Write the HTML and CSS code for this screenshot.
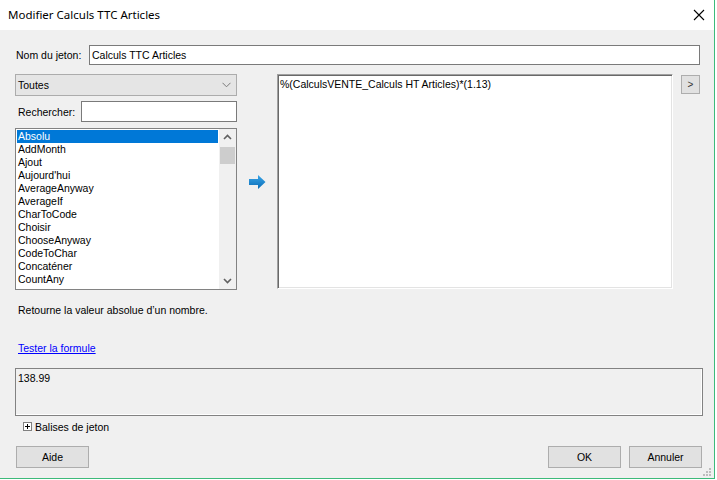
FILE: index.html
```html
<!DOCTYPE html>
<html lang="fr">
<head>
    <meta charset="UTF-8">
    <title>Modifier Calculs TTC Articles</title>
    <link rel="stylesheet" href="styles.css">
</head>
<body>
    <div class="window">
        <div class="titlebar">
            <span class="title">Modifier Calculs TTC Articles</span>
            <svg class="close" width="12" height="12" viewBox="0 0 12 12">
                <path d="M1 1 L11 11 M11 1 L1 11" stroke="#000" stroke-width="1.1" fill="none"/>
            </svg>
        </div>

        <div class="client">
            <div class="name-row">
                <label class="name-label">Nom du jeton:</label>
                <div class="field name-field">Calculs TTC Articles</div>
            </div>

            <div class="main">
                <div class="left">
                    <div class="combo">
                        <span>Toutes</span>
                        <svg width="9" height="6" viewBox="0 0 9 6">
                            <path d="M0.5 0.8 L4.5 4.8 L8.5 0.8" stroke="#7a7a7a" stroke-width="1" fill="none"/>
                        </svg>
                    </div>
                    <div class="search-row">
                        <label>Rechercher:</label>
                        <div class="field search-field"></div>
                    </div>
                    <div class="listbox">
                        <ul class="items">
                            <li class="selected">Absolu</li>
                            <li>AddMonth</li>
                            <li>Ajout</li>
                            <li>Aujourd'hui</li>
                            <li>AverageAnyway</li>
                            <li>AverageIf</li>
                            <li>CharToCode</li>
                            <li>Choisir</li>
                            <li>ChooseAnyway</li>
                            <li>CodeToChar</li>
                            <li>Concaténer</li>
                            <li>CountAny</li>
                        </ul>
                        <div class="scrollbar">
                            <svg class="sb-arrow" width="17" height="17" viewBox="0 0 17 17">
                                <path d="M5 10 L8.5 6.5 L12 10" stroke="#606060" stroke-width="1.6" fill="none"/>
                            </svg>
                            <div class="thumb"></div>
                            <div class="sb-track"></div>
                            <svg class="sb-arrow" width="17" height="17" viewBox="0 0 17 17">
                                <path d="M5 7 L8.5 10.5 L12 7" stroke="#606060" stroke-width="1.6" fill="none"/>
                            </svg>
                        </div>
                    </div>
                </div>

                <div class="insert">
                    <svg width="17" height="14" viewBox="0 0 17 14">
                        <defs>
                            <linearGradient id="blue" x1="0" y1="0" x2="0" y2="1">
                                <stop offset="0" stop-color="#3aa6e8"/>
                                <stop offset="1" stop-color="#0a6cb6"/>
                            </linearGradient>
                        </defs>
                        <path d="M0 4 H9 V0 L16.5 7 L9 14 V10 H0 Z" fill="url(#blue)"/>
                    </svg>
                </div>

                <div class="formula">%(CalculsVENTE_Calculs HT Articles)*(1.13)</div>

                <button type="button" class="small-btn">&gt;</button>
            </div>

            <p class="desc">Retourne la valeur absolue d’un nombre.</p>

            <a class="test-link" href="#">Tester la formule</a>

            <div class="result">138.99</div>

            <div class="tags">
                <span class="plus-box"></span>
                <span>Balises de jeton</span>
            </div>

            <div class="buttons">
                <button type="button" class="btn aide">Aide</button>
                <button type="button" class="btn ok">OK</button>
                <button type="button" class="btn">Annuler</button>
            </div>
        </div>

        <div class="grip">
            <svg width="9" height="9" viewBox="0 0 9 9" fill="#bdbdbd">
                <rect x="6" y="0" width="2" height="2"/>
                <rect x="3" y="3" width="2" height="2"/>
                <rect x="6" y="3" width="2" height="2"/>
                <rect x="0" y="6" width="2" height="2"/>
                <rect x="3" y="6" width="2" height="2"/>
                <rect x="6" y="6" width="2" height="2"/>
            </svg>
        </div>
    </div>
</body>
</html>
```

FILE: styles.css
```css
body {
    margin: 0;
    width: 717px;
    height: 480px;
    background-color: #fff;
    font-family: 'Liberation Sans', Arial, sans-serif;
    font-size: 10.5px;
    color: #000;
    overflow: hidden;
}

.window {
    position: relative;
    width: 714px;
    height: 478px;
    border-right: 1px solid #3dba7a;
    border-bottom: 1px solid #3dba7a;
    display: flex;
    flex-direction: column;
}

.titlebar {
    height: 30px;
    background-color: #fff;
    display: flex;
    align-items: center;
    justify-content: space-between;
    padding: 0 9px 0 8px;
}

.title {
    font-family: 'Noto Sans', 'Open Sans', sans-serif;
    font-size: 11.5px;
    margin-top: -1px;
}

.close {
    margin-top: -1px;
}

.client {
    flex: 1;
    background-color: #f0f0f0;
    padding: 0 11px 0 15px;
}

.field {
    box-sizing: border-box;
    background-color: #fff;
    border: 1px solid #7a7a7a;
    padding: 0 2px;
    line-height: 18px;
}

.name-row {
    display: flex;
    align-items: center;
    margin-top: 15px;
}

.name-label {
    width: 74px;
    padding-left: 1px;
    box-sizing: border-box;
}

.name-field {
    width: 611px;
    height: 20px;
}

.main {
    display: flex;
    align-items: flex-start;
    margin-top: 9px;
}

.left {
    width: 222px;
}

.combo {
    box-sizing: border-box;
    height: 22px;
    background-color: #e5e5e5;
    border: 1px solid #acacac;
    display: flex;
    align-items: center;
    justify-content: space-between;
    padding: 0 5px 0 2px;
}

.search-row {
    display: flex;
    align-items: center;
    margin-top: 5px;
}

.search-row label {
    width: 66px;
    padding-left: 3px;
    box-sizing: border-box;
}

.search-field {
    width: 156px;
    height: 21px;
}

.listbox {
    box-sizing: border-box;
    height: 162px;
    margin-top: 6px;
    border: 1px solid #828282;
    background-color: #fff;
    display: flex;
}

.items {
    flex: 1;
    list-style: none;
    margin: 0;
    padding: 1px;
    overflow: hidden;
}

.items li {
    height: 13px;
    line-height: 13px;
    padding-left: 1px;
}

.items li.selected {
    background-color: #0078d7;
    color: #fff;
}

.scrollbar {
    width: 17px;
    background-color: #f0f0f0;
    display: flex;
    flex-direction: column;
}

.sb-arrow {
    display: block;
    flex: none;
}

.thumb {
    height: 17px;
    margin: 1px 1px 0;
    background-color: #cdcdcd;
}

.sb-track {
    flex: 1;
}

.insert {
    width: 40px;
    padding: 101px 0 0 12px;
    box-sizing: border-box;
}

.insert svg {
    display: block;
}

.formula {
    box-sizing: border-box;
    width: 396px;
    height: 215px;
    background-color: #fff;
    border-top: 1px solid #a0a0a0;
    border-left: 1px solid #a0a0a0;
    border-right: 1px solid #fff;
    border-bottom: 1px solid #fff;
    box-shadow: inset 1px 1px #696969, inset -1px -1px #e3e3e3;
    padding: 3px 2px;
    line-height: 13px;
}

.small-btn {
    width: 19px;
    height: 19px;
    margin: 1px 0 0 8px;
    padding: 0;
    background-color: #e1e1e1;
    border: 1px solid #adadad;
    font-family: 'Liberation Sans', Arial, sans-serif;
    font-size: 10px;
    color: #333;
}

.desc {
    margin: 14px 0 0 3px;
    line-height: 13px;
}

.test-link {
    display: inline-block;
    margin: 25px 0 0 3px;
    line-height: 13px;
    color: #0000ff;
}

.result {
    box-sizing: border-box;
    height: 48px;
    margin-top: 13px;
    border: 1px solid #828282;
    box-shadow: inset -1px -1px #fff;
    padding: 3px 2px;
    line-height: 13px;
}

.tags {
    display: flex;
    align-items: center;
    margin: 4px 0 0 8px;
    height: 13px;
}

.plus-box {
    position: relative;
    box-sizing: border-box;
    width: 9px;
    height: 9px;
    border: 1px solid #808080;
    background-color: #fff;
    margin-right: 3px;
}

.plus-box::before,
.plus-box::after {
    content: "";
    position: absolute;
    background-color: #000;
}

.plus-box::before {
    left: 1px;
    top: 3px;
    width: 5px;
    height: 1px;
}

.plus-box::after {
    left: 3px;
    top: 1px;
    width: 1px;
    height: 5px;
}

.buttons {
    display: flex;
    margin-top: 13px;
}

.btn {
    width: 73px;
    height: 22px;
    padding: 0;
    background-color: #e1e1e1;
    border: 1px solid #adadad;
    font-family: 'Liberation Sans', Arial, sans-serif;
    font-size: 10.5px;
    color: #000;
}

.aide {
    margin-left: 1px;
}

.ok {
    margin-left: auto;
    margin-right: 8px;
}

.buttons .btn:last-child {
    margin-right: 1px;
}

.grip {
    position: absolute;
    right: 2px;
    bottom: 1px;
    line-height: 0;
}
```
